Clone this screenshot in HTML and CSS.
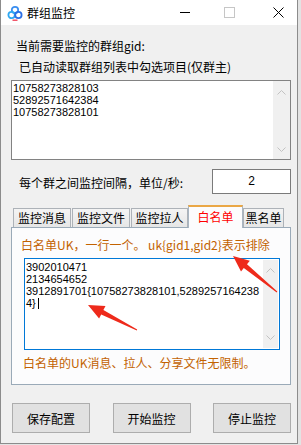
FILE: index.html
```html
<!DOCTYPE html>
<html lang="zh-CN">
<head>
    <meta charset="UTF-8">
    <meta name="viewport" content="width=device-width, initial-scale=1.0">
    <title>群组监控</title>
    <link rel="stylesheet" href="styles.css">
</head>
<body>
    <div class="window">
        <!-- Title bar -->
        <div class="titlebar">
            <svg class="app-icon" width="16" height="16" viewBox="0 0 16 16">
                <circle cx="8" cy="5" r="3.2" fill="none" stroke="#3a8ef0" stroke-width="1.8"/>
                <circle cx="4.6" cy="10" r="3.2" fill="none" stroke="#2fa8f2" stroke-width="1.8"/>
                <circle cx="11.4" cy="10" r="3.2" fill="none" stroke="#2b6fe6" stroke-width="1.8"/>
                <line x1="5.5" y1="15.2" x2="10.5" y2="15.2" stroke="#f0445a" stroke-width="1.4"/>
            </svg>
            <span class="title">群组监控</span>
            <div class="controls">
                <span class="ctl-min"></span>
                <span class="ctl-max"></span>
                <svg class="ctl-close" width="11" height="11" viewBox="0 0 11 11">
                    <path d="M0.5 0.5 L10.5 10.5 M10.5 0.5 L0.5 10.5" stroke="#000" stroke-width="1"/>
                </svg>
            </div>
        </div>

        <div class="content">
            <p class="label l1">当前需要监控的群组gid:</p>
            <p class="label l2">已自动读取群组列表中勾选项目(仅群主)</p>

            <div class="textbox gid-box">
                <div class="lines">10758273828103<br>52892571642384<br>10758273828101</div>
                <div class="scrollbar">
                    <svg width="9" height="5" viewBox="0 0 9 5"><polyline points="0.5,4.5 4.5,0.5 8.5,4.5" fill="none" stroke="#c2c2c2"/></svg>
                    <svg width="9" height="5" viewBox="0 0 9 5"><polyline points="0.5,0.5 4.5,4.5 8.5,0.5" fill="none" stroke="#c2c2c2"/></svg>
                </div>
            </div>

            <div class="interval-row">
                <span class="interval-label">每个群之间监控间隔，单位/秒:</span>
                <div class="interval-input">2</div>
            </div>

            <!-- Tabs -->
            <div class="tabs">
                <div class="tab w1">监控消息</div>
                <div class="tab w1">监控文件</div>
                <div class="tab w2">监控拉人</div>
                <div class="tab active">白名单</div>
                <div class="tab w3">黑名单</div>
            </div>

            <div class="panel">
                <p class="hint">白名单UK，一行一个。 uk{gid1,gid2}表示排除</p>
                <div class="textbox white-box">
                    <div class="lines">3902010471<br>2134654652<br>3912891701{10758273828101,5289257164238<br>4}<span class="caret"></span></div>
                    <div class="scrollbar small">
                        <svg width="9" height="5" viewBox="0 0 9 5"><polyline points="0.5,4.5 4.5,0.5 8.5,4.5" fill="none" stroke="#c2c2c2"/></svg>
                        <svg width="9" height="5" viewBox="0 0 9 5"><polyline points="0.5,0.5 4.5,4.5 8.5,0.5" fill="none" stroke="#c2c2c2"/></svg>
                    </div>
                </div>
                <p class="hint note">白名单的UK消息、拉人、分享文件无限制。</p>
            </div>

            <div class="buttons">
                <button class="btn">保存配置</button>
                <button class="btn">开始监控</button>
                <button class="btn">停止监控</button>
            </div>
        </div>

        <!-- Annotation arrows drawn over the form -->
        <svg class="arrows" width="298" height="445" viewBox="0 0 298 445">
            <polygon points="277.3,291.6 247,264.2 249.8,260.7 233,256 241,271.5 243.8,268 276.7,292.4" fill="#ee2a1b"/>
            <polygon points="137.2,329.6 103.4,310.1 105.5,306.1 88,305 99.1,318.5 101.2,314.5 136.8,330.4" fill="#ee2a1b"/>
        </svg>
    </div>
</body>
</html>
```

FILE: styles.css
```css
/* Base */
body {
    margin: 0;
    background-color: #e3e3e3;
    font-family: "Noto Sans CJK SC", sans-serif;
    font-size: 12px;
    color: #000;
}

p {
    margin: 0;
}

/* Window frame */
.window {
    position: relative;
    width: 296px;
    background-color: #f0f0f0;
    border: 1px solid #8c8c8c;
    border-top: none;
}

/* Title bar */
.titlebar {
    height: 25px;
    background-color: #fff;
    display: flex;
    align-items: center;
}

.app-icon {
    margin-left: 6px;
}

.title {
    margin-left: 4px;
    line-height: 14px;
}

.controls {
    margin-left: auto;
    margin-right: 13px;
    display: flex;
    align-items: center;
}

.ctl-min {
    width: 10px;
    height: 1px;
    background-color: #000;
}

.ctl-max {
    width: 9px;
    height: 9px;
    border: 1px solid #c6c6c6;
    margin-left: 34px;
}

.ctl-close {
    margin-left: 38px;
}

/* Form content */
.content {
    padding: 14px 6px 10px 10px;
}

.label {
    line-height: 14px;
}

.l1 {
    margin-left: 5px;
}

.l2 {
    margin-left: 8px;
    margin-top: 7px;
}

.textbox {
    display: flex;
    background-color: #fff;
}

.gid-box {
    margin-top: 6px;
    height: 78px;
    border: 1px solid #828282;
}

.lines {
    flex: 1;
    padding: 1px 0 0 1px;
    font-family: "Liberation Sans", sans-serif;
    font-size: 11px;
    line-height: 12px;
    white-space: nowrap;
}

.scrollbar {
    width: 17px;
    background-color: #f0f0f0;
    display: flex;
    flex-direction: column;
    justify-content: space-between;
    align-items: center;
    padding: 9px 0 7px;
}

.scrollbar.small {
    width: 15px;
    margin: 1px 1px 1px 0;
    padding: 8px 0 8px;
}

/* Interval row */
.interval-row {
    margin-top: 9px;
    display: flex;
    align-items: center;
    justify-content: space-between;
}

.interval-label {
    margin-left: 8px;
    padding-top: 3px;
    line-height: 14px;
}

.interval-input {
    width: 77px;
    height: 23px;
    border: 1px solid #7a7a7a;
    background-color: #fff;
    text-align: center;
    line-height: 23px;
    font-family: "Liberation Sans", sans-serif;
    font-size: 12px;
}

/* Tabs */
.tabs {
    margin-top: 11px;
    height: 22px;
    padding-left: 2px;
    display: flex;
    align-items: flex-end;
}

.tab {
    height: 18px;
    border: 1px solid #adb2b8;
    border-bottom: none;
    background: linear-gradient(#f4f4f4, #e6e6e6);
    line-height: 18px;
    text-align: center;
    margin-right: 1px;
}

.tab.w1 {
    width: 56px;
}

.tab.w2 {
    width: 55px;
    margin-right: 0;
}

.tab.w3 {
    width: 39px;
}

.tab.active {
    position: relative;
    z-index: 1;
    width: 53px;
    height: 21px;
    margin-right: 0;
    margin-bottom: -1px;
    border-color: #a9b6c2;
    border-top: 2px solid #eaa745;
    background: #fcfcfd;
    color: #ff0000;
    line-height: 20px;
}

.panel {
    border: 1px solid #9aaab8;
    background-color: #fcfcfd;
    padding: 10px 9px 14px 9px;
}

.hint {
    color: #c26200;
    line-height: 14px;
    white-space: nowrap;
}

.white-box {
    margin: 6px 0 0 3px;
    width: 254px;
    height: 90px;
    border: 1px solid #0078d7;
}

.white-box .lines {
    padding: 2px 0 0 1px;
}

.caret {
    display: inline-block;
    width: 0;
    height: 11px;
    margin-left: 2px;
    border-left: 1px solid #000;
    vertical-align: -2px;
}

.note {
    margin: 6px 0 0 2px;
}

/* Bottom buttons */
.buttons {
    margin-top: 18px;
    padding-left: 1px;
    display: flex;
    justify-content: space-between;
}

.btn {
    width: 78px;
    height: 30px;
    border: 1px solid #adadad;
    background-color: #e1e1e1;
    font-family: "Noto Sans CJK SC", sans-serif;
    font-size: 12px;
    color: #000;
    padding: 0;
}

/* Overlay arrows */
.arrows {
    position: absolute;
    top: 0;
    left: -1px;
    pointer-events: none;
}
```
